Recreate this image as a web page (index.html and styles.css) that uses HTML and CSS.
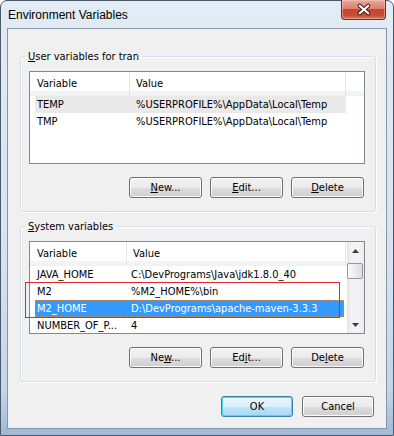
FILE: index.html
```html
<!DOCTYPE html>
<html lang="en">
<head>
    <meta charset="UTF-8">
    <title>Environment Variables</title>
    <link rel="stylesheet" href="styles.css">
</head>
<body>
    <div class="window">
        <div class="titlebar">
            <span class="title">Environment Variables</span>
            <button class="close" aria-label="Close">
                <svg width="45" height="19" viewBox="0 0 45 19">
                    <path d="M18.5 5.5 L27.5 13.5 M27.5 5.5 L18.5 13.5" stroke="#3b1a14" stroke-width="4.2" stroke-linecap="round"/>
                    <path d="M18.5 5.5 L27.5 13.5 M27.5 5.5 L18.5 13.5" stroke="#ffffff" stroke-width="2.2" stroke-linecap="round"/>
                </svg>
            </button>
        </div>

        <div class="client">
            <fieldset class="group">
                <legend><u>U</u>ser variables for tran</legend>
                <div class="list list-user">
                    <div class="list-head">
                        <span class="head-cell head-name">Variable</span>
                        <span class="head-cell head-value">Value</span>
                        <span class="head-cell head-rest"></span>
                    </div>
                    <div class="row row-dim">
                        <span class="cell-name">TEMP</span>
                        <span class="cell-value">%USERPROFILE%\AppData\Local\Temp</span>
                    </div>
                    <div class="row">
                        <span class="cell-name">TMP</span>
                        <span class="cell-value">%USERPROFILE%\AppData\Local\Temp</span>
                    </div>
                </div>
                <div class="button-row">
                    <button class="btn"><u>N</u>ew...</button>
                    <button class="btn"><u>E</u>dit...</button>
                    <button class="btn"><u>D</u>elete</button>
                </div>
            </fieldset>

            <fieldset class="group group-system">
                <legend><u>S</u>ystem variables</legend>
                <div class="list-wrap">
                    <div class="list list-system">
                        <div class="list-body">
                            <div class="list-head">
                                <span class="head-cell head-name">Variable</span>
                                <span class="head-cell head-value">Value</span>
                                <span class="head-cell head-rest"></span>
                            </div>
                            <div class="row">
                                <span class="cell-name">JAVA_HOME</span>
                                <span class="cell-value">C:\DevPrograms\Java\jdk1.8.0_40</span>
                            </div>
                            <div class="row">
                                <span class="cell-name">M2</span>
                                <span class="cell-value">%M2_HOME%\bin</span>
                            </div>
                            <div class="row row-selected">
                                <span class="cell-name">M2_HOME</span>
                                <span class="cell-value">D:\DevPrograms\apache-maven-3.3.3</span>
                            </div>
                            <div class="row">
                                <span class="cell-name">NUMBER_OF_P...</span>
                                <span class="cell-value">4</span>
                            </div>
                        </div>
                        <div class="scrollbar">
                            <div class="scroll-arrow">
                                <svg width="7" height="4" viewBox="0 0 7 4"><polygon points="0,4 3.5,0 7,4" fill="#3d3d3d"/></svg>
                            </div>
                            <div class="scroll-thumb"></div>
                            <div class="scroll-track"></div>
                            <div class="scroll-arrow">
                                <svg width="7" height="4" viewBox="0 0 7 4"><polygon points="0,0 7,0 3.5,4" fill="#3d3d3d"/></svg>
                            </div>
                        </div>
                    </div>
                    <!-- red box drawn over the two maven rows -->
                    <div class="highlight-box"></div>
                </div>
                <div class="button-row">
                    <button class="btn">Ne<u>w</u>...</button>
                    <button class="btn">Ed<u>i</u>t...</button>
                    <button class="btn">De<u>l</u>ete</button>
                </div>
            </fieldset>

            <div class="dialog-buttons">
                <button class="btn btn-default">OK</button>
                <button class="btn">Cancel</button>
            </div>
        </div>
    </div>
</body>
</html>
```

FILE: styles.css
```css
body {
    margin: 0;
    background-color: #ffffff;
    font-family: "DejaVu Sans Condensed", "Liberation Sans", sans-serif;
    font-size: 11px;
    color: #000000;
}

.window {
    width: 394px;
    height: 436px;
    box-sizing: border-box;
    border: 1px solid #4b5a6b;
    border-radius: 7px 7px 0 0;
    background: linear-gradient(to bottom, #e3ebf4 0%, #d6e2ef 60%, #c3d5e8 90%, #9fb9d6 100%);
    padding: 0 6px 6px 6px;
    display: flex;
    flex-direction: column;
}

.titlebar {
    height: 27px;
    display: flex;
    justify-content: space-between;
    align-items: flex-start;
}

.title {
    font-family: "Liberation Sans", Arial, sans-serif;
    font-size: 12px;
    line-height: 14px;
    margin: 7px 0 0 1px;
}

.close {
    width: 45px;
    height: 20px;
    margin: -1px 1px 0 0;
    padding: 0;
    border: 1px solid #6e2a1f;
    border-top: none;
    border-radius: 0 0 4px 4px;
    background: linear-gradient(to bottom, #e9a99b 0%, #d9826f 45%, #c8452f 50%, #c84b33 80%, #d9785f 100%);
    box-shadow: inset 0 0 0 1px rgba(255, 210, 200, 0.45);
    display: flex;
    align-items: center;
    justify-content: center;
}

.close svg {
    display: block;
}

.client {
    flex: 1;
    border: 1px solid #8596ab;
    background-color: #f0f0f0;
    padding: 0 10px 0 12px;
    display: flex;
    flex-direction: column;
}

.group {
    margin: 21px 0 0 0;
    padding: 8px 10px 13px 8px;
    border: 1px solid #d5dfe5;
    border-radius: 3px;
    box-shadow: inset 1px 1px 0 #ffffff, 1px 1px 0 #ffffff;
}

.group-system {
    margin-top: 8px;
}

.group legend {
    margin-left: -4px;
    padding: 0 3px;
    line-height: 13px;
}

.list {
    box-sizing: border-box;
    width: 336px;
    height: 93px;
    border: 1px solid #828790;
    background-color: #ffffff;
    overflow: hidden;
}

.list-head {
    display: flex;
    height: 24px;
    background: linear-gradient(to bottom, #ffffff 0%, #ffffff 80%, #f3f4f6 80%, #f1f2f4 100%);
}

.head-cell {
    box-sizing: border-box;
    line-height: 24px;
    border-right: 1px solid #e3e5e8;
    white-space: nowrap;
}

.head-name {
    width: 100px;
    padding-left: 7px;
}

.head-value {
    width: 216px;
    padding-left: 6px;
}

.head-rest {
    flex: 1;
    border-right: none;
}

.row {
    display: flex;
    width: 311px;
    height: 17px;
    line-height: 17px;
    margin-left: 5px;
    box-sizing: border-box;
    white-space: nowrap;
}

.cell-name {
    width: 95px;
    padding-left: 2px;
    box-sizing: border-box;
}

.cell-value {
    padding-left: 6px;
}

.row-dim {
    background-color: #e9e9e9;
}

/* system list: narrower first column, scrollbar on the right */
.list-wrap {
    position: relative;
}

.list-system {
    display: flex;
}

.list-body {
    width: 317px;
}

.list-system .head-name {
    width: 97px;
}

.list-system .head-value {
    width: 219px;
}

.list-system .row {
    width: 309px;
}

.list-system .cell-name {
    width: 92px;
}

.list-system .cell-value {
    padding-left: 4px;
}

.row-selected {
    background-color: #3399ff;
    color: #ffffff;
    border: 1px dashed #e87a10;
    line-height: 15px;
}

.row-selected .cell-name {
    padding-left: 1px;
    width: 91px;
}

.scrollbar {
    width: 17px;
    display: flex;
    flex-direction: column;
    background: linear-gradient(to right, #e4e4e4 0%, #f2f2f2 25%, #f4f4f4 75%, #eaeaea 100%);
}

.scroll-arrow {
    height: 17px;
    display: flex;
    align-items: center;
    justify-content: center;
}

.scroll-arrow svg {
    display: block;
}

.scroll-thumb {
    height: 16px;
    margin: 4px 1px 0 0;
    box-sizing: border-box;
    border: 1px solid #979797;
    border-radius: 2px;
    background: linear-gradient(to right, #fbfbfb 0%, #ececec 50%, #dedede 100%);
}

.scroll-track {
    flex: 1;
}

.highlight-box {
    position: absolute;
    left: -4px;
    top: 41px;
    width: 315px;
    height: 36px;
    box-sizing: border-box;
    border: 1px solid #e0262e;
}

.button-row {
    display: flex;
    justify-content: flex-end;
    gap: 8px;
    margin-top: 13px;
    padding-right: 1px;
}

.btn {
    width: 73px;
    height: 21px;
    padding: 0;
    font-family: inherit;
    font-size: 11px;
    color: #000000;
    border: 1px solid #707070;
    border-radius: 3px;
    background: linear-gradient(to bottom, #f2f2f2 0%, #ebebeb 50%, #dddddd 50%, #cfcfcf 100%);
    box-shadow: inset 0 0 0 1px #fcfcfc;
}

.dialog-buttons {
    display: flex;
    justify-content: flex-end;
    gap: 9px;
    margin: 14px 2px 0 0;
}

.dialog-buttons .btn {
    width: 72px;
}

.btn-default {
    border-color: #3c7fb1;
    background: linear-gradient(to bottom, #eaf6fd 0%, #d9f0fc 50%, #bee6fd 50%, #a7d9f5 100%);
    box-shadow: inset 0 0 0 1px #48d7fb;
}
```
